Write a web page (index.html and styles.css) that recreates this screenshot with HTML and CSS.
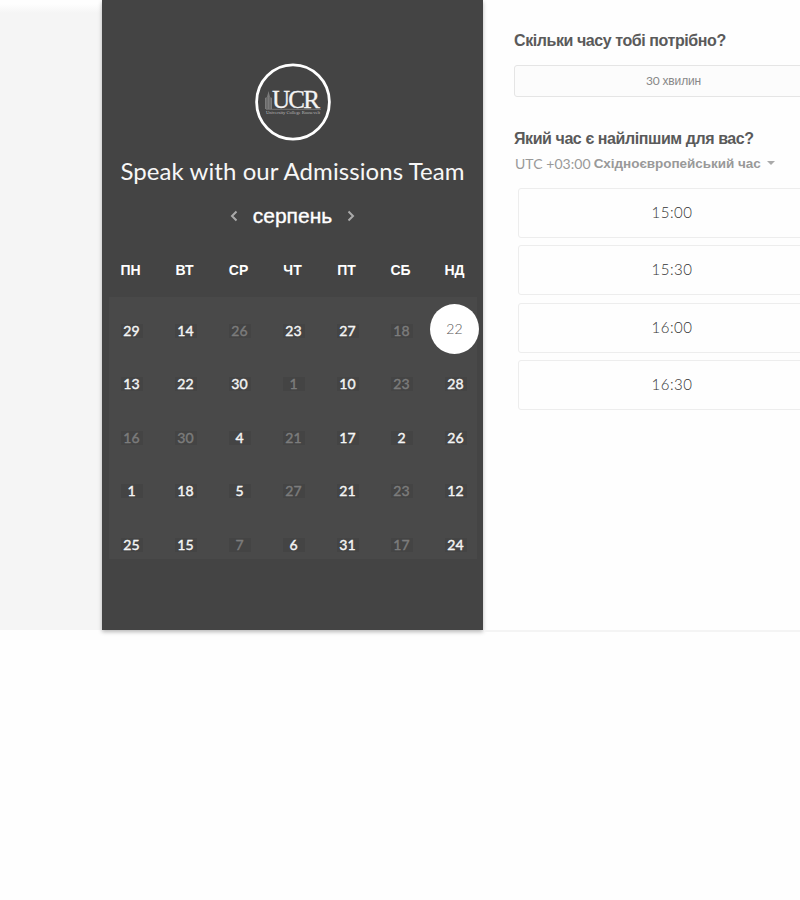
FILE: index.html
```
<!DOCTYPE html>
<html lang="uk">
<head>
<meta charset="utf-8">
<title>Speak with our Admissions Team</title>
<link rel="stylesheet" href="styles.css">
</head>
<body>
<main class="scheduler">
  <div class="gutter"></div>
  <section class="calendar">
    <svg class="logo" viewBox="0 0 78 78">
      <ellipse cx="39" cy="39" rx="36.400" ry="37.200" fill="none" stroke="#fff" stroke-width="2.800"/>
      <path d="M11 46V35l2-1 1.500-6 1.500 6 2 1v11z" fill="#7c7c7c"/>
      <path d="M13 34v12M16 34v12" stroke="#555" stroke-width=".7"/>
      <text class="logo-letters" x="18" y="44.700" textLength="48">UCR</text>
      <path d="M12 46.300h55" stroke="#888" stroke-width=".7"/>
      <text class="logo-caption" x="12" y="50.500" textLength="54" lengthAdjust="spacingAndGlyphs">University College Roosevelt</text>
    </svg>
    <h1 class="title">Speak with our Admissions Team</h1>
    <div class="month">
      <svg class="chevron" viewBox="0 0 8 12"><path d="M6.500 1.500 2 6l4.500 4.500"/></svg>
      <span class="month-name">серпень</span>
      <svg class="chevron" viewBox="0 0 8 12"><path d="M1.500 1.500 6 6l-4.500 4.500"/></svg>
    </div>
    <div class="weekdays"><span>ПН</span><span>ВТ</span><span>СР</span><span>ЧТ</span><span>ПТ</span><span>СБ</span><span>НД</span></div>
    <div class="days">
      <span><b>29</b></span><span><b>14</b></span><span class="off"><b>26</b></span><span><b>23</b></span><span><b>27</b></span><span class="off"><b>18</b></span><span class="selected"><b>22</b></span>
      <span><b>13</b></span><span><b>22</b></span><span><b>30</b></span><span class="off"><b>1</b></span><span><b>10</b></span><span class="off"><b>23</b></span><span><b>28</b></span>
      <span class="off"><b>16</b></span><span class="off"><b>30</b></span><span><b>4</b></span><span class="off"><b>21</b></span><span><b>17</b></span><span><b>2</b></span><span><b>26</b></span>
      <span><b>1</b></span><span><b>18</b></span><span><b>5</b></span><span class="off"><b>27</b></span><span><b>21</b></span><span class="off"><b>23</b></span><span><b>12</b></span>
      <span><b>25</b></span><span><b>15</b></span><span class="off"><b>7</b></span><span><b>6</b></span><span><b>31</b></span><span class="off"><b>17</b></span><span><b>24</b></span>
    </div>
  </section>
  <section class="times">
    <h2 class="q-duration">Скільки часу тобі потрібно?</h2>
    <div class="duration">30 <span class="unit">хвилин</span></div>
    <h2 class="q-time">Який час є найліпшим для вас?</h2>
    <div class="zone"><span class="utc">UTC +03:00</span><span class="zone-name">Східноєвропейський час</span><svg class="caret" viewBox="0 0 8 4"><path d="M0 0h8L4 4z"/></svg></div>
    <div class="slots">
      <div class="slot">15:00</div>
      <div class="slot">15:30</div>
      <div class="slot">16:00</div>
      <div class="slot">16:30</div>
    </div>
  </section>
</main>
</body>
</html>
```
FILE: styles.css
```
* { box-sizing: border-box; }
body {
  margin: 0;
  height: 900px;
  overflow: hidden;
  background: #fefefe;
  font-family: Lato, "Liberation Sans", sans-serif;
}
.scheduler { display: flex; height: 630px; }
.gutter {
  width: 102px;
  flex: none;
  background: linear-gradient(#fefefe 4px, #f5f5f5 13px);
}
.calendar {
  width: 381px;
  flex: none;
  display: flex;
  flex-direction: column;
  align-items: center;
  padding-top: 63px;
  background: #444;
  box-shadow: 0 2px 4px rgba(0, 0, 0, .28);
}
.logo { width: 78px; height: 78px; flex: none; }
.logo-letters { fill: #f4f4f4; stroke: #f4f4f4; stroke-width: .3; font: 25px "Liberation Serif", serif; }
.logo-caption { fill: #bbb; font: 5px "Liberation Serif", serif; }
.title {
  margin: 14px 0 0;
  font-size: 24px;
  line-height: 32px;
  font-weight: 400;
  letter-spacing: .08px;
  white-space: nowrap;
  color: #f7f7f7;
}
.month {
  display: flex;
  align-items: center;
  height: 26px;
  margin-top: 16px;
  gap: 15px;
}
.month-name {
  font: 21px/26px "Liberation Sans", sans-serif;
  color: #fff;
  -webkit-text-stroke: .35px #fff;
}
.chevron { width: 8px; height: 12px; fill: none; stroke: #aaa; stroke-width: 2; }
.weekdays, .days {
  display: grid;
  grid-template-columns: repeat(7, 54px);
  justify-content: center;
  text-align: center;
}
.weekdays {
  margin-top: 32px;
  width: 381px;
  font: bold 14px/18px "Liberation Sans", sans-serif;
  color: #fff;
}
.days {
  width: 368px;
  height: 262px;
  margin-top: 18px;
  padding-top: 7px;
  grid-auto-rows: 53.500px;
  background: #494949;
}
.days span { display: flex; align-items: center; justify-content: center; height: 53px; padding-left: 2px; }
.days b {
  width: 22px;
  height: 14px;
  background: #444;
  font-size: 14px;
  line-height: 14px;
  font-weight: 400;
  -webkit-text-stroke: .4px currentColor;
  letter-spacing: .1px;
  color: #f5f5f5;
}
.days .off b { color: #7c7c7c; }
.days .selected { padding-left: 0; }
.days .selected b {
  width: 49px;
  height: 50px;
  flex: none;
  margin-top: -3px;
  border-radius: 50%;
  background: #fff;
  line-height: 49px;
  font-weight: 300;
  -webkit-text-stroke: 0;
  color: #555;
}
.times { flex: none; width: 354px; padding: 31px 0 0 31px; box-shadow: 0 3px 0 -1px #f4f4f4; }
h2 {
  margin: 0;
  font: bold 16px/20px "Liberation Sans", sans-serif;
  letter-spacing: -.42px;
  color: #5a5a5a;
  white-space: nowrap;
}
.duration {
  height: 32px;
  margin-top: 14px;
  padding-right: 4px;
  border: 1px solid #e5e5e5;
  border-radius: 3px;
  background: #fcfcfc;
  text-align: center;
  font-size: 12px;
  line-height: 30px;
  letter-spacing: -.15px;
  color: #888;
}
.unit { font-family: "Liberation Sans", sans-serif; }
.q-time { margin-top: 32px; }
.zone { display: flex; align-items: center; height: 18px; margin: 5px 0 0 1px; font-size: 14px; color: #999; white-space: nowrap; }
.utc { letter-spacing: .05px; }
.zone-name { margin-left: 3px; padding-top: 2px; font: bold 13.500px/18px "Liberation Sans", sans-serif; letter-spacing: -.04px; }
.caret { width: 8px; height: 4px; margin-left: 6px; fill: #aaa; }
.slots { display: grid; grid-auto-rows: 50px; row-gap: 7.400px; margin: 16px 0 0 4px; }
.slot {
  border: 1px solid #ededed;
  border-radius: 3px;
  text-align: center;
  font-size: 15px;
  font-weight: 300;
  line-height: 46px;
  letter-spacing: .5px;
  padding-right: 11px;
  color: #333;
}
```
